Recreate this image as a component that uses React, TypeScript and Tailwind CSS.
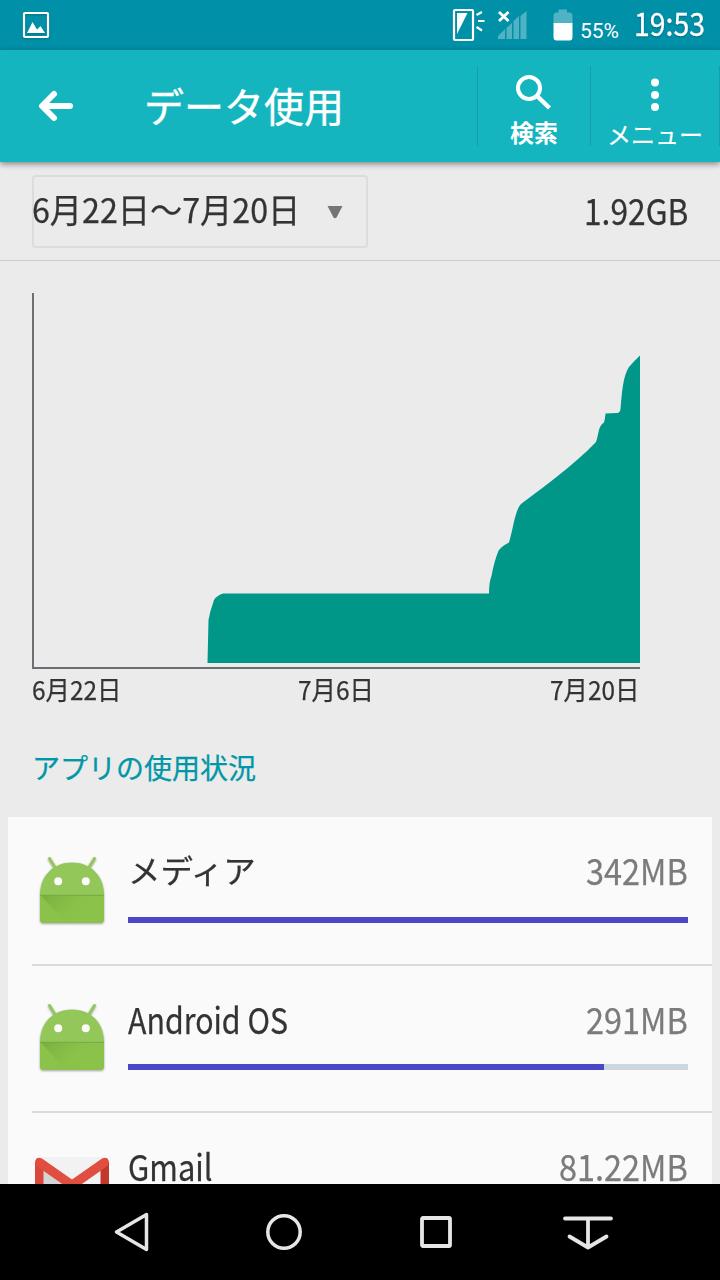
import { useLayoutEffect, useRef, useState } from "react";
import type { ReactNode } from "react";

type FitProps = { w: number; className?: string; children: ReactNode };

// Condenses a line of text horizontally to a given width
function Fit({ w, className = "", children }: FitProps) {
  const ref = useRef<HTMLSpanElement>(null);
  const [scale, setScale] = useState(1);

  useLayoutEffect(() => {
    if (ref.current) setScale(w / ref.current.offsetWidth);
  }, [w]);

  return (
    <div className={`flex shrink-0 ${className}`} style={{ width: w }}>
      <span
        ref={ref}
        className="shrink-0 origin-left whitespace-nowrap"
        style={{ transform: `scaleX(${scale})` }}
      >
        {children}
      </span>
    </div>
  );
}

const apps = [
  { name: "メディア", nameWidth: 128, size: "342MB", sizeWidth: 102, percent: 100, icon: AndroidIcon },
  { name: "Android OS", nameWidth: 160, size: "291MB", sizeWidth: 102, percent: 85, icon: AndroidIcon },
  { name: "Gmail", nameWidth: 85, size: "81.22MB", sizeWidth: 129, percent: 24, icon: GmailIcon },
];

function AndroidIcon() {
  return (
    <svg width="80" height="80" viewBox="0 0 80 80" className="drop-shadow-[0_1px_1px_rgba(0,0,0,0.35)]">
      <defs>
        <linearGradient id="fold" x1="0" y1="0" x2="1" y2="0.5">
          <stop offset="0" stopColor="#6fa23c" />
          <stop offset="1" stopColor="#8bc34a" stopOpacity="0" />
        </linearGradient>
      </defs>
      <path d="M17.5 7.5 24 18M62.5 7.5 56 18" stroke="#93c759" strokeWidth="3" strokeLinecap="round" />
      <path d="M8 44C8 25 21 11.500 40 11.500S72 25 72 44Z" fill="#93c759" />
      <path d="M8 44H72V68.500Q72 72 68.500 72H11.500Q8 72 8 68.500Z" fill="#8bc34a" />
      <path d="M8.500 44H60L48 72H34Z" fill="url(#fold)" opacity="0.7" />
      <path d="M8 44.300H72" stroke="#79a847" strokeWidth="1" />
      <circle cx="26.200" cy="30.300" r="4" fill="#fafafa" />
      <circle cx="53.800" cy="30.300" r="4" fill="#fafafa" />
    </svg>
  );
}

function GmailIcon() {
  return (
    <svg width="80" height="80" viewBox="0 -3 80 80">
      <path d="M7 9H73V62H7Z" fill="#f2f2f2" />
      <path d="M11 22 40 44 22 62H11Z" fill="#d5d5d5" />
      <path d="M3 14V58Q3 62 7 62H11.500V22L3 14Z" fill="#d9483b" />
      <path d="M77 14V58Q77 62 73 62H68.500V22L77 14Z" fill="#c1392b" />
      <path d="M3 14Q4 8 10 10.500L40 31.500 70 10.500Q76 8 77 14 77 17 74 19L40 43 6 19Q3 17 3 14Z" fill="#e04e41" />
    </svg>
  );
}

function StatusBar() {
  return (
    <div className="flex h-[50px] items-start bg-[#0090a8] text-white">
      <svg width="32" height="32" viewBox="0 0 32 32" className="mt-[9px] ml-5 shrink-0 drop-shadow-[0_1px_1px_rgba(0,0,0,0.2)]">
        <rect x="4" y="4" width="24" height="24" rx="1" fill="none" stroke="#fff" strokeWidth="2.2" />
        <path d="M7 24 12.500 13 17 20.500 20.500 17 25 24Z" fill="#fff" />
      </svg>
      <svg width="126" height="42" viewBox="450 0 126 42" className="ml-[398px] shrink-0">
        <rect x="454" y="10" width="19" height="30" rx="1" fill="none" stroke="#fff" strokeWidth="2.2" />
        <path d="M457 13H467.500L457 34Z" fill="#fff" />
        <path d="M476.500 15 482 12M478 21H484.500M476.500 27 482 30.500" stroke="#fff" strokeWidth="2.2" />
        <path d="M498 39V36L505 29V39ZM506.500 39V28L512 23V39ZM513.500 39V21L519 16V39ZM520.500 39V16L526.500 11V39Z" fill="#4fb3c3" />
        <path d="M499 12 508.500 21M508.500 12 499 21" stroke="#fff" strokeWidth="2.800" />
        <path d="M558.500 9.500H567V12.500H569.500Q572.500 12.500 572.500 16V23H553.500V16Q553.500 12.500 556.500 12.500H558.500Z" fill="#4fb3c3" />
        <path d="M553.500 23H572.500V37Q572.500 40.500 569.500 40.500H556.500Q553.500 40.500 553.500 37Z" fill="#fff" />
      </svg>
      <Fit w={39} className="mt-[18px] ml-[4px] font-['Roboto',sans-serif] text-[21px] leading-[26px]">
        55%
      </Fit>
      <Fit w={71} className="ml-[15px] text-[32px] leading-[45px] [-webkit-text-stroke:0.3px] [text-shadow:0_1px_2px_rgba(0,0,0,0.3)]">
        19:53
      </Fit>
    </div>
  );
}

function Toolbar() {
  return (
    <header className="relative z-10 flex h-28 bg-[#14b5bf] text-white shadow-[0_2px_6px_rgba(0,0,0,0.45)]">
      <svg width="40" height="36" viewBox="0 0 40 36" className="mt-[38px] ml-9 shrink-0">
        <path d="M34 18H6.500M18 6 6 18 18 30" fill="none" stroke="#fff" strokeWidth="6" strokeLinecap="round" strokeLinejoin="round" />
      </svg>
      <Fit w={200} className="mt-[25px] ml-[68px] text-[40px] leading-[60px] [-webkit-text-stroke:0.4px]">
        データ使用
      </Fit>
      <div className="mt-4 ml-[133px] flex h-20 w-[113px] flex-col items-center border-l border-[#139fac]">
        <svg width="40" height="40" viewBox="1 0 40 40" className="mt-[5px] shrink-0">
          <circle cx="16" cy="17" r="11" fill="none" stroke="#fff" strokeWidth="4" />
          <path d="M24 25 36.500 37" stroke="#fff" strokeWidth="4.500" />
        </svg>
        <span className="mt-[7px] text-[24px] leading-7 font-bold">検索</span>
      </div>
      <div className="mt-4 flex h-20 w-[130px] flex-col items-center border-x border-[#139fac]">
        <svg width="12" height="40" viewBox="0 0 12 40" className="mt-[9px] shrink-0">
          <circle cx="6" cy="7.500" r="4" fill="#fff" />
          <circle cx="6" cy="20" r="4" fill="#fff" />
          <circle cx="6" cy="32" r="4" fill="#fff" />
        </svg>
        <Fit w={96} className="mt-[5px] text-[24px] leading-7 [-webkit-text-stroke:0.2px]">
          メニュー
        </Fit>
      </div>
    </header>
  );
}

function CycleFilter() {
  return (
    <div className="flex h-[99px] shrink-0 items-start justify-between border-b border-[#cccccc] px-8 text-[#333]">
      <div className="mt-[13px] flex h-[73px] w-[336px] items-start rounded border-2 border-[#dcdcdc]">
        <Fit w={268} className="-ml-0.5 mt-[7px] text-[34px] leading-[50px] slashed-zero">
          6月22日～7月20日
        </Fit>
        <svg width="18" height="14" viewBox="0 0 18 14" className="mt-[28px] ml-[26px]">
          <path d="M1.500 1H16.500L10.500 12.500Q9 14 7.500 12.500Z" fill="#757575" />
        </svg>
      </div>
      <Fit w={104} className="mt-[21px] text-[36px] leading-[52px]">
        1.92GB
      </Fit>
    </div>
  );
}

function UsageChart() {
  return (
    <div className="mt-8 px-8">
      <svg width="608" height="376" viewBox="32 293 608 376" className="block">
        <path
          d="M207.500 663 208.500 620Q210 611 214 600Q216 596 223 593.500H489Q489 582 491.500 576Q494 562 498 552Q500 547 509 542.500C513 530 515 510 521 504C542 488 573 466 596 442C599 434 598 426 604 422.500Q605 419 605.500 413.500L617 413Q620 413 620.500 409C622 392 623 376 629 367Q634 361 640 355.500V663Z"
          fill="#009688"
        />
        <path d="M33 293V668H640" fill="none" stroke="#6b6f73" strokeWidth="2" />
      </svg>
      <div className="flex w-[607px] justify-between text-[26px] leading-9 text-[#333] slashed-zero">
        <Fit w={89} className="mt-0.5">6月22日</Fit>
        <Fit w={76} className="mt-0.5">7月6日</Fit>
        <Fit w={89} className="mt-0.5">7月20日</Fit>
      </div>
    </div>
  );
}

export default function App() {
  return (
    <div className="flex h-[1280px] w-[720px] flex-col overflow-hidden bg-[#ebebeb] font-['Noto_Sans_CJK_JP',sans-serif]">
      <StatusBar />
      <Toolbar />

      <main className="flex min-h-0 flex-1 flex-col overflow-hidden [-webkit-text-stroke:0.25px]">
        <CycleFilter />
        <UsageChart />

        <h2 className="mt-[39px] mb-[29px] ml-8 shrink-0 text-[28px] leading-[42px] text-[#0097a7]">
          アプリの使用状況
        </h2>

        {/* App list */}
        <ul className="mx-2 shrink-0 bg-[#fafafa]">
          {apps.map((app) => {
            const Icon = app.icon;
            return (
              <li key={app.name} className="group ml-6 flex h-[147px] shrink-0 border-b-2 border-[#dadada] pr-6 first:h-[149px] first:pt-0.5">
                <div className="mt-8 w-24 shrink-0">
                  <Icon />
                </div>
                <div className="flex-1 pt-[26px]">
                  <div className="flex h-[52px] justify-between leading-[53px] text-[#333] group-first:leading-[48px]">
                    <Fit w={app.nameWidth} className={app.name === "メディア" ? "text-[32px]" : "text-[36px]"}>
                      {app.name}
                    </Fit>
                    <Fit w={app.sizeWidth} className="text-[36px] text-[#7b7b7b]">
                      {app.size}
                    </Fit>
                  </div>
                  <div className="mt-5 h-1.5 bg-[#cdd6dc]">
                    <div className="h-full bg-[#4a48c8]" style={{ width: `${app.percent}%` }} />
                  </div>
                </div>
              </li>
            );
          })}
        </ul>
      </main>

      {/* Navigation keys */}
      <nav className="flex h-24 shrink-0 items-center bg-black pl-[114px]">
        <svg width="36" height="40" viewBox="0 0 36 40" fill="none" stroke="#e6e6e6" strokeWidth="3.500" strokeLinejoin="round">
          <path d="M32.500 2.500V37.500L2.500 20Z" />
        </svg>
        <svg width="40" height="40" viewBox="0 0 40 40" fill="none" stroke="#e6e6e6" strokeWidth="3.500" className="ml-[114px]">
          <circle cx="20" cy="20" r="16.200" />
        </svg>
        <svg width="40" height="40" viewBox="0 0 40 40" fill="none" stroke="#e6e6e6" strokeWidth="3.800" className="ml-28">
          <rect x="6" y="6" width="28" height="28" rx="1" />
        </svg>
        <svg width="52" height="40" viewBox="0 0 52 40" fill="none" stroke="#e6e6e6" strokeWidth="3.800" strokeLinecap="round" strokeLinejoin="round" className="ml-[106px]">
          <path d="M3 6.500H49M26 7V35.500M7.500 24.500 26 35.500 44.500 24.500" />
        </svg>
      </nav>
    </div>
  );
}
